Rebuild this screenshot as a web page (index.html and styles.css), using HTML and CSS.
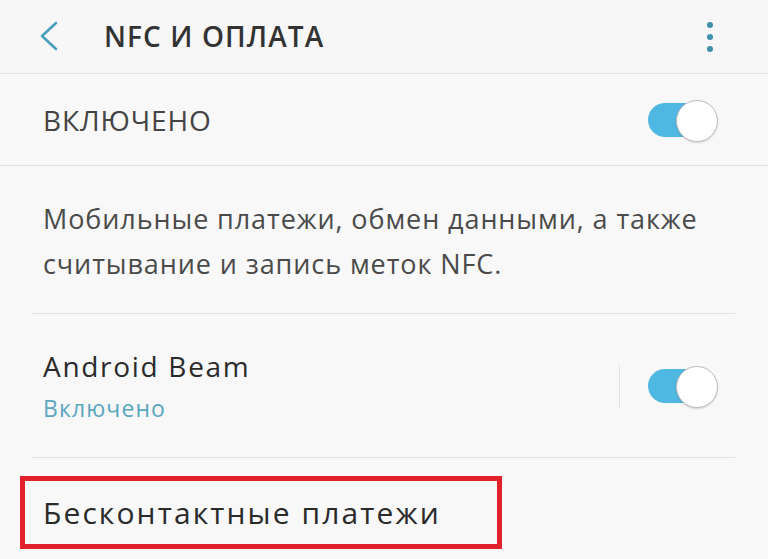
FILE: index.html
```html
<!DOCTYPE html>
<html lang="ru">
<head>
<meta charset="utf-8">
<link rel="stylesheet" href="styles.css">
</head>
<body>
<div class="screen">
  <header class="appbar">
    <svg class="back" width="20" height="30" viewBox="0 0 20 30"><path d="M17 2 L3 15 L17 28" fill="none" stroke="#4a9fb8" stroke-width="2.6" stroke-linecap="round" stroke-linejoin="round"/></svg>
    <h1 class="title">NFC И ОПЛАТА</h1>
    <div class="more"><span></span><span></span><span></span></div>
  </header>
  <div class="master">
    <span class="master-label">ВКЛЮЧЕНО</span>
    <span class="toggle"></span>
  </div>
  <p class="desc">Мобильные платежи, обмен данными, а также считывание и запись меток NFC.</p>
  <div class="divider"></div>
  <div class="item">
    <div class="item-text">
      <div class="item-title">Android Beam</div>
      <div class="item-sub">Включено</div>
    </div>
    <span class="vsep"></span>
    <span class="toggle"></span>
  </div>
  <div class="divider"></div>
  <div class="highlight">
    <div class="item-title">Бесконтактные платежи</div>
  </div>
</div>
</body>
</html>
```
FILE: styles.css
```css
* { box-sizing: border-box; }
html, body { margin: 0; padding: 0; }
body {
  width: 768px;
  height: 559px;
  overflow: hidden;
  background: #f8f8f8;
  font-family: "Open Sans", "Noto Sans", sans-serif;
  color: #2b2b2b;
}
.screen { width: 768px; }
.appbar {
  height: 74px;
  display: flex;
  align-items: center;
  padding: 0 55px 2px 39px;
  border-bottom: 1px solid #e2e2e2;
  background: #f7f7f7;
}
.back { flex: none; }
.title {
  margin: 0 0 0 45px;
  font-size: 28px;
  font-weight: 600;
  color: #333;
  letter-spacing: 1.1px;
  flex: 1;
}
.more {
  display: flex;
  flex-direction: column;
  gap: 6px;
  margin-top: 2px;
}
.more span {
  width: 6px;
  height: 6px;
  border-radius: 50%;
  background: #3f90ae;
}
.master {
  height: 92px;
  display: flex;
  align-items: center;
  justify-content: space-between;
  padding: 0 50px 0 43px;
  border-bottom: 1px solid #e2e2e2;
}
.master-label {
  font-size: 28px;
  color: #444;
  letter-spacing: 0.9px;
}
.toggle {
  position: relative;
  width: 70px;
  height: 40px;
  flex: none;
}
.toggle::before {
  content: "";
  position: absolute;
  left: 0;
  top: 3px;
  width: 60px;
  height: 34px;
  border-radius: 17px;
  background: #4fb8e2;
}
.toggle::after {
  content: "";
  position: absolute;
  right: 0;
  top: 0;
  width: 40px;
  height: 40px;
  border-radius: 50%;
  background: #fff;
  border: 1.5px solid #bdbdbd;
  box-shadow: 0 1px 2px rgba(0,0,0,0.15);
}
.desc {
  margin: 0;
  padding: 30px 30px 27px 43px;
  font-size: 27px;
  line-height: 45px;
  letter-spacing: 0.9px;
  color: #4a4a4a;
}
.divider {
  height: 1px;
  margin: 0 33px 0 32px;
  background: #e2e2e2;
}
.item {
  height: 143px;
  display: flex;
  align-items: center;
  padding: 0 50px 0 43px;
}
.item-text {
  flex: 1;
  display: flex;
  flex-direction: column;
  gap: 9px;
}
.item-title {
  font-size: 28px;
  line-height: 36px;
  letter-spacing: 1.7px;
  color: #2a2a2a;
}
.item-sub {
  font-size: 23px;
  line-height: 30px;
  letter-spacing: 1.1px;
  color: #5aa6c0;
}
.vsep {
  width: 1px;
  height: 42px;
  background: #e0e0e0;
  margin-right: 28px;
  flex: none;
}
.highlight {
  width: 482px;
  margin: 18px 0 0 20px;
  border: 5px solid #e2202a;
  padding: 12px 0 11px 18px;
}
.highlight .item-title {
  font-size: 30px;
  line-height: 40px;
  letter-spacing: 2.1px;
}
```
